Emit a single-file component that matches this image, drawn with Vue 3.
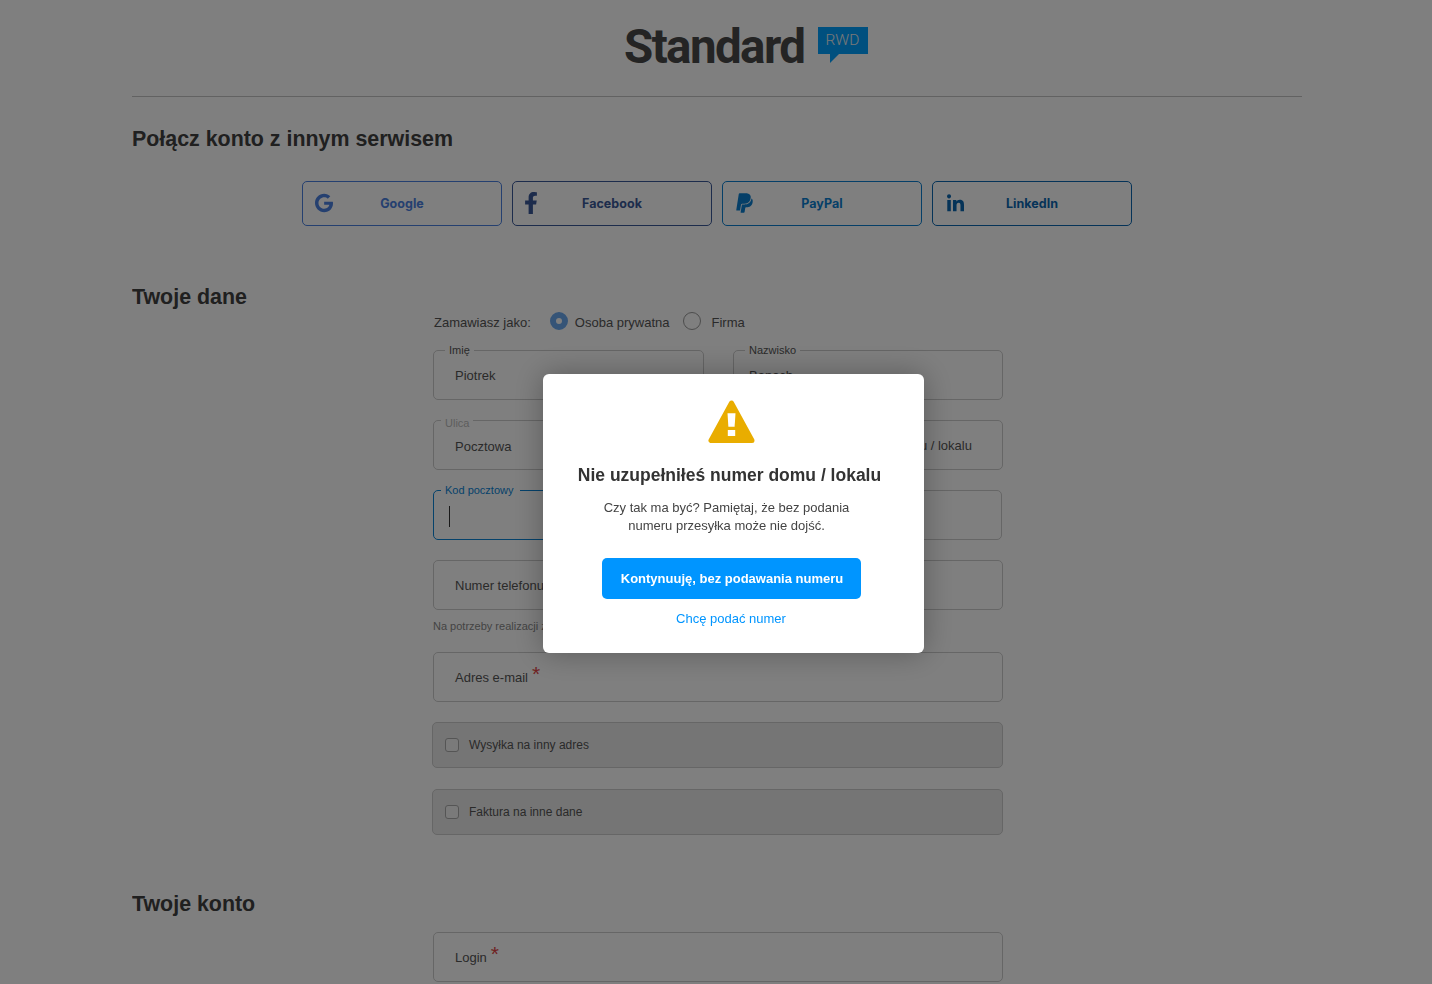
<script setup>
const socials = [
  { name: 'Google', cls: 'google', box: '0 0 488 512', w: 18, d: 'M488 261.8C488 403.3 391.1 504 248 504 110.8 504 0 393.2 0 256S110.8 8 248 8c66.8 0 123 24.5 166.3 64.9l-67.5 64.9C258.5 52.6 94.3 116.6 94.3 256c0 86.5 69.1 156.6 153.7 156.6 98.2 0 135-70.4 140.8-106.9H248v-85.3h236.1c2.3 12.7 3.9 24.9 3.9 41.4z' },
  { name: 'Facebook', cls: 'facebook', box: '0 0 320 512', w: 14, d: 'M279.14 288l14.22-92.66h-88.91v-60.13c0-25.35 12.42-50.06 52.24-50.06h40.42V6.26S260.43 0 225.36 0c-73.22 0-121.08 44.38-121.08 124.72v70.62H22.89V288h81.39v224h100.17V288z' },
  { name: 'PayPal', cls: 'paypal', box: '0 0 384 512', w: 17, d: 'M111.4 295.9c-3.5 19.2-17.4 108.7-21.5 134-.3 1.8-1 2.5-3 2.5H12.3c-7.6 0-13.1-6.6-12.1-13.9L58.8 46.6c1.5-9.6 10.1-16.9 20-16.9 152.3 0 165.1-3.7 204 11.4 60.1 23.3 65.6 79.5 44 140.3-21.5 62.6-72.5 89.5-140.1 90.3-43.4.7-69.5-7-75.3 24.2zM357.1 152c-1.8-1.3-2.5-1.8-3 1.3-2 11.4-5.1 22.5-8.8 33.6-39.9 113.8-150.5 103.9-204.5 103.9-6.1 0-10.1 3.3-10.9 9.4-22.6 140.4-27.1 169.7-27.1 169.7-1 7.1 3.5 12.9 10.6 12.9h63.5c8.6 0 15.7-6.3 17.4-14.9.7-5.4-1.1 6.1 14.4-91.3 4.6-22 14.3-19.7 29.3-19.7 71 0 126.4-28.8 142.9-112.3 6.5-34.8 4.6-71.4-23.8-92.6z' },
  { name: 'LinkedIn', cls: 'linkedin', box: '0 0 448 512', w: 17, d: 'M100.28 448H7.4V148.9h92.88zM53.79 108.1C24.09 108.1 0 83.5 0 53.8a53.79 53.79 0 0 1 107.58 0c0 29.7-24.1 54.3-53.79 54.3zM447.9 448h-92.68V302.4c0-34.7-.7-79.2-48.29-79.2-48.29 0-55.69 37.7-55.69 76.7V448h-92.78V148.9h89.08v40.8h1.3c12.4-23.5 42.69-48.3 87.88-48.3 94 0 111.28 61.9 111.28 142.3V448z' }
]
</script>

<template>
  <div class="page">
    <header class="head">
      <div class="logo">
        <span class="word">Standard</span>
        <span class="badge">RWD</span>
      </div>
    </header>

    <h2 class="title-connect">Połącz konto z innym serwisem</h2>
    <div class="socials">
      <a v-for="s in socials" :key="s.name" class="social" :class="s.cls">
        <svg class="social-icon" :viewBox="s.box" :width="s.w" height="22" fill="currentColor"><path :d="s.d" /></svg>
        <span>{{ s.name }}</span>
      </a>
    </div>

    <section class="sec data">
      <h2>Twoje dane</h2>
      <form class="form">
        <div class="who">
          <span class="who-label">Zamawiasz jako:</span>
          <span class="radio on"></span><span class="r-text">Osoba prywatna</span>
          <span class="radio"></span><span class="r-text">Firma</span>
        </div>

        <div class="row">
          <div class="field"><label class="legend">Imię</label><span class="val">Piotrek</span></div>
          <div class="field tight"><label class="legend">Nazwisko</label><span class="val">Banach</span></div>
        </div>
        <div class="row street">
          <div class="field"><label class="legend muted">Ulica</label><span class="val low">Pocztowa</span></div>
          <div class="field"><span class="val">Numer domu / lokalu</span></div>
        </div>
        <div class="row">
          <div class="field focus"><label class="legend blue">Kod pocztowy</label><i class="caret"></i></div>
          <div class="field short"></div>
        </div>
        <div class="row">
          <div class="field"><span class="val">Numer telefonu</span></div>
          <div class="field"></div>
        </div>
        <p class="note">Na potrzeby realizacji zamówienia</p>
        <div class="field email"><span class="val">Adres e-mail<b class="star">*</b></span></div>

        <label class="check first"><span class="box"></span>Wysyłka na inny adres</label>
        <label class="check"><span class="box"></span>Faktura na inne dane</label>
      </form>
    </section>

    <section class="sec account">
      <h2>Twoje konto</h2>
      <form class="form login">
        <div class="field"><span class="val">Login<b class="star">*</b></span></div>
      </form>
    </section>

    <div class="overlay">
      <div class="modal">
        <svg class="warn" width="47" height="43" viewBox="0 0 47 43">
          <path d="M23.5 3 L3 40.5 H44 Z" fill="#e9ad00" stroke="#e9ad00" stroke-width="5" stroke-linejoin="round" />
          <path d="M19.5 13.3 H27.5 L26.6 26.7 H20.4 Z" fill="#fff" />
          <rect x="19.8" y="30" width="7.4" height="6" fill="#fff" />
        </svg>
        <h3>Nie uzupełniłeś numer domu / lokalu</h3>
        <p>Czy tak ma być? Pamiętaj, że bez podania<br />numeru przesyłka może nie dojść.</p>
        <button type="button" class="go">Kontynuuję, bez podawania numeru</button>
        <a class="back">Chcę podać numer</a>
      </div>
    </div>
  </div>
</template>

<style scoped>
.page {
  width: 1170px;
  margin-left: 132px;
  font-family: "Liberation Sans", Arial, sans-serif;
  color: #444;
  height: 984px;
  overflow: hidden;
}
.head {
  box-sizing: border-box;
  height: 97px;
  border-bottom: 1px solid #c4c4c4;
  padding: 21px 0 0 492px;
}
.logo { display: flex; align-items: flex-start; gap: 14px; }
.word {
  font-family: Roboto, sans-serif;
  font-weight: 700;
  font-size: 47.5px;
  line-height: 52px;
  letter-spacing: -1.6px;
  color: #484848;
}
.badge {
  position: relative;
  margin-top: 6px;
  width: 50px;
  height: 27px;
  background: #00a0ff;
  color: #f0f0f0;
  font-family: Roboto, sans-serif;
  font-weight: 300;
  font-size: 15.5px;
  line-height: 27px;
  text-align: center;
  text-indent: -2px;
}
.badge::after {
  content: "";
  position: absolute;
  left: 12px;
  top: 27px;
  border-top: 9px solid #00a0ff;
  border-right: 9px solid transparent;
}
h2 {
  margin: 0;
  font-size: 21.4px;
  line-height: 26px;
  font-weight: 700;
  color: #404040;
}
.title-connect { margin-top: 29px; }
.socials {
  display: flex;
  gap: 10px;
  margin: 29px 0 0 170px;
}
.social {
  position: relative;
  box-sizing: border-box;
  width: 200px;
  height: 45px;
  border: 1px solid currentColor;
  border-radius: 5px;
  display: flex;
  align-items: center;
  justify-content: center;
  font-family: Inter, sans-serif;
  font-size: 12.5px;
  font-weight: 700;
  letter-spacing: 0.05px;
}
.social-icon { position: absolute; left: 12px; top: 10px; }
.facebook .social-icon { left: 11px; }
.paypal .social-icon { left: 13px; }
.linkedin .social-icon { left: 14px; top: 11px; }
.google { color: #4a80e0; }
.facebook { color: #3b5998; }
.paypal { color: #0b7fd0; }
.linkedin { color: #0a66b0; }

.sec { display: grid; grid-template-columns: 301px 570px; }
.data { margin-top: 58px; }
.form { padding-top: 28px; font-size: 13px; }
.who {
  display: flex;
  align-items: center;
  height: 20px;
  padding-left: 1px;
  margin-bottom: 18px;
  color: #555;
}
.who-label { margin-right: 19px; }
.radio {
  box-sizing: border-box;
  width: 18px;
  height: 18px;
  border-radius: 50%;
  border: 1px solid #999;
  margin-right: 7px;
  margin-top: -2px;
}
.radio.on { border: 6px solid #6aa8ee; background: #fff; }
.r-text { margin-right: 14px; margin-top: 1px; }
.r-text:last-child { margin-left: 3px; }

.row { display: grid; grid-template-columns: 271px 270px; column-gap: 29px; margin-bottom: 20px; }
.street { grid-template-columns: 377px 173px; column-gap: 20px; }
.field {
  position: relative;
  box-sizing: border-box;
  height: 50px;
  border: 1px solid #ccc;
  border-radius: 5px;
  padding-left: 21px;
  display: flex;
  align-items: center;
  color: #555;
}
.tight { padding-left: 15px; }
.short { width: 269px; }
.low { margin-top: 2px; }
.legend {
  position: absolute;
  left: 11px;
  top: -7px;
  padding: 0 4px;
  background: #fff;
  font-size: 11px;
  line-height: 13px;
  color: #555;
}
.legend.muted { left: 7px; top: -4px; color: #bbb; }
.legend.blue { left: 7px; top: -7px; color: #0a84d6; padding-right: 7px; }
.focus { border-color: #0a84d6; }
.caret { position: absolute; left: 15px; top: 15px; width: 1px; height: 21px; background: #333; }
.star {
  position: relative;
  top: -1px;
  margin-left: 4px;
  font-size: 21px;
  line-height: 0;
  font-weight: 400;
  color: #e04545;
}
.note { margin: -11px 0 19px; font-size: 11px; line-height: 14px; color: #888; }
.email { margin-bottom: 20px; }
.check {
  box-sizing: border-box;
  height: 46px;
  margin-top: 21px;
  border: 1px solid #ccc;
  border-radius: 5px;
  background: #ebebeb;
  display: flex;
  align-items: center;
  padding-left: 12px;
  font-size: 12px;
  color: #555;
  width: 571px;
  margin-left: -1px;
}
.check.first { margin-top: 0; }
.box {
  box-sizing: border-box;
  width: 14px;
  height: 14px;
  border: 1px solid #aaa;
  border-radius: 3px;
  background: #f5f5f5;
  margin-right: 10px;
}
.account { margin-top: 55px; }
.account h2 { margin-top: 1px; }
.login { padding-top: 42px; }

.overlay {
  position: fixed;
  inset: 0;
  background: rgba(0, 0, 0, 0.5);
  padding: 374px 0 0 543px;
}
.modal {
  box-sizing: border-box;
  width: 381px;
  height: 279px;
  background: #fff;
  border-radius: 6px;
  box-shadow: 0 0 30px rgba(0, 0, 0, 0.3);
  padding: 26px 5px 0 0;
  display: flex;
  flex-direction: column;
  align-items: center;
  color: #333;
}
.warn { display: block; }
h3 {
  margin: 21px 3px 0 0;
  font-size: 17.5px;
  line-height: 22px;
  font-weight: 700;
  color: #333;
}
.modal p {
  margin: 13px 9px 0 0;
  font-size: 13px;
  line-height: 18px;
  text-align: center;
  color: #444;
}
.go {
  margin-top: 23px;
  width: 259px;
  height: 41px;
  border: 0;
  border-radius: 5px;
  background: #0095ff;
  color: #fff;
  font-family: inherit;
  font-size: 13px;
  font-weight: 700;
  padding: 0 0 0 2px;
}
.back {
  margin-top: 12px;
  font-size: 13px;
  line-height: 16px;
  color: #0095ff;
}
</style>

<style>
html, body { overflow: hidden; background: #fff; }
</style>
